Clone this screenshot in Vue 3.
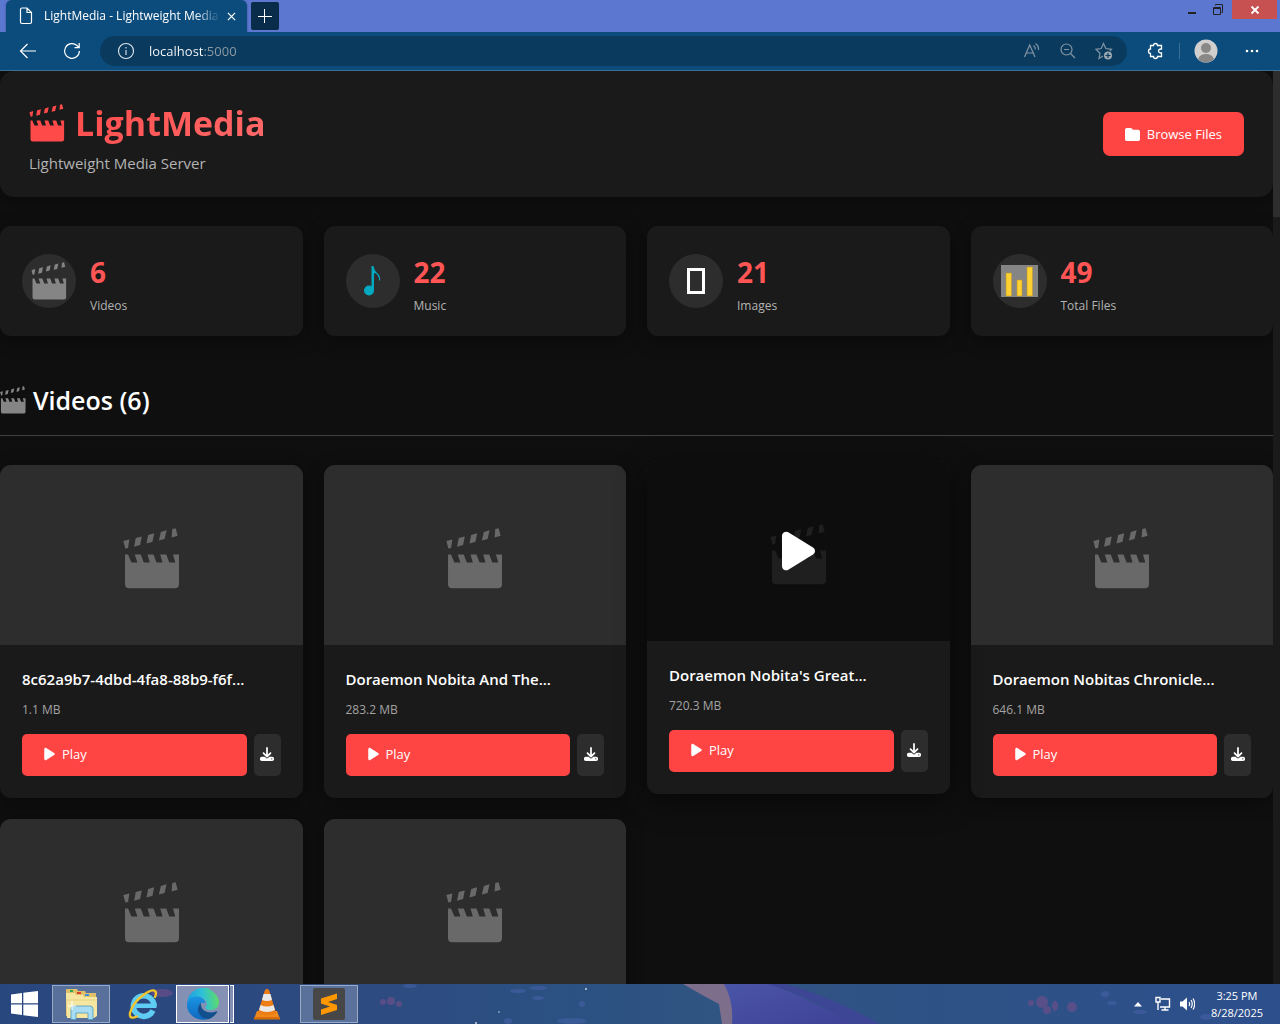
<script setup>
import { h } from 'vue'

const stats = [
  { kind: 'video', value: 6, label: 'Videos' },
  { kind: 'music', value: 22, label: 'Music' },
  { kind: 'image', value: 21, label: 'Images' },
  { kind: 'total', value: 49, label: 'Total Files' },
]

const videos = [
  { id: 1, title: '8c62a9b7-4dbd-4fa8-88b9-f6f...', size: '1.1 MB' },
  { id: 2, title: 'Doraemon Nobita And The...', size: '283.2 MB' },
  { id: 3, title: "Doraemon Nobita's Great...", size: '720.3 MB', active: true },
  { id: 4, title: 'Doraemon Nobitas Chronicle...', size: '646.1 MB' },
  { id: 5 },
  { id: 6 },
]

const icon = (viewBox, d) => () =>
  h('svg', { viewBox, fill: 'currentColor', 'aria-hidden': 'true' }, [h('path', { d })])

const ClapperIcon = icon(
  '0 0 170 182',
  'M6 79H15L25 103H43L35 79H53L62 103H80L73 79H91L100 103H118L111 79H129L138 103H156L149 79H167V168Q167 180 155 180H18Q6 180 6 168ZM1 39L19 34L15 60L7 61ZM38 30L56 25L51 51L33 56ZM75 21L93 16L88 41L70 46ZM113 12L130 7L124 33L107 37ZM147 3L157 1L163 23L145 28Z'
)
const PlayIcon = icon(
  '0 0 384 512',
  'M73 39c-14.8-9.1-33.4-9.4-48.5-.9S0 62.6 0 80V432c0 17.4 9.4 33.4 24.5 41.9s33.7 8.1 48.5-.9L361 297c14.3-8.7 23-24.2 23-41s-8.7-32.2-23-41L73 39z'
)
const FolderIcon = icon(
  '0 0 512 512',
  'M64 480H448c35.3 0 64-28.7 64-64V160c0-35.3-28.7-64-64-64H288c-10.1 0-19.6-4.7-25.6-12.8L243.2 57.6C231.1 41.5 212.1 32 192 32H64C28.7 32 0 60.7 0 96V416c0 35.3 28.7 64 64 64z'
)
const DownloadIcon = icon(
  '0 0 512 512',
  'M288 32c0-17.7-14.3-32-32-32s-32 14.3-32 32V274.7l-73.4-73.4c-12.5-12.5-32.8-12.5-45.3 0s-12.5 32.8 0 45.3l128 128c12.5 12.5 32.8 12.5 45.3 0l128-128c12.5-12.5 12.5-32.8 0-45.3s-32.8-12.5-45.3 0L288 274.7V32zM64 352c-35.3 0-64 28.7-64 64v32c0 35.3 28.7 64 64 64H448c35.3 0 64-28.7 64-64V416c0-35.3-28.7-64-64-64H346.5l-45.3 45.3c-25 25-65.5 25-90.5 0L165.5 352H64zm368 56a24 24 0 1 1 0 48 24 24 0 1 1 0-48z'
)
</script>

<template>
  <div class="screen">
    <div class="titlebar">
      <div class="tab">
        <svg class="doc" viewBox="0 0 14 18" fill="none" stroke="#fff" stroke-width="1.2">
          <path d="M1.500 2.500Q1.500 1 3 1H8L12.500 5.500V15Q12.500 16.500 11 16.500H3Q1.500 16.500 1.500 15ZM8 1V5.500H12.500" />
        </svg>
        <span class="tab-title">LightMedia - Lightweight Media Server</span>
        <button class="bare tab-close" aria-label="Close tab">
          <svg viewBox="0 0 10 10" stroke="#fff" stroke-width="1.4"><path d="M1 1L9 9M9 1L1 9" /></svg>
        </button>
      </div>
      <button class="bare new-tab" aria-label="New tab">
        <svg viewBox="0 0 14 14" stroke="#fff" stroke-width="1"><path d="M6.500 0V14M0 7.500H14" /></svg>
      </button>
      <div class="window-controls">
        <button class="bare win" aria-label="Minimize">
          <svg viewBox="0 0 12 12" fill="#222"><rect x="2" y="8" width="8" height="2" /></svg>
        </button>
        <button class="bare win" aria-label="Restore">
          <svg viewBox="0 0 12 12" fill="none" stroke="#222"><path d="M3.500 1.500V.5H10.500V8.500H9.500" /><path d="M1.500 3.500H8.500V10.500H1.500ZM1.500 4.500H8.500" /></svg>
        </button>
        <button class="bare win win-close" aria-label="Close">
          <svg viewBox="0 0 12 12" stroke="#fff" stroke-width="1.8"><path d="M2.500 2.500L9.500 9.500M9.500 2.500L2.500 9.500" /></svg>
        </button>
      </div>
    </div>

    <div class="toolbar">
      <div class="nav">
        <button class="bare" aria-label="Back">
          <svg class="glyph" viewBox="0 0 18 18" fill="none" stroke="#fff" stroke-width="1.2"><path d="M17 9H1.500M8.500 2L1.500 9L8.500 16" /></svg>
        </button>
        <button class="bare" aria-label="Refresh">
          <svg class="glyph" viewBox="0 0 18 18" fill="none" stroke="#fff" stroke-width="1.2"><path d="M16.400 9A7.400 7.400 0 1 1 14 3.500L16 5.500M16.200 1V5.700H11.500" /></svg>
        </button>
      </div>
      <div class="address">
        <svg class="glyph" viewBox="0 0 18 18" fill="none" stroke="#dfe8ef" stroke-width="1.1"><circle cx="9" cy="9" r="7.500" /><path d="M9 8V13M9 5V6.500" /></svg>
        <input class="url" aria-label="Address" value="localhost:5000" />
        <div class="address-actions">
          <button class="bare" aria-label="Read aloud">
            <svg class="glyph" viewBox="0 0 18 18" fill="none" stroke="#8395a3" stroke-width="1.2"><path d="M1.500 15L6.700 3L12 15M3.300 11H10.200M10.500 3.500Q12.500 5 12.300 7.500M12.500 1.500Q16 4 15.500 8" /></svg>
          </button>
          <button class="bare" aria-label="Zoom">
            <svg class="glyph" viewBox="0 0 18 18" fill="none" stroke="#8395a3" stroke-width="1.2"><circle cx="7.500" cy="7.500" r="5.500" /><path d="M5 7.500H10M11.500 11.500L16 16" /></svg>
          </button>
          <button class="bare" aria-label="Add to favorites">
            <svg class="glyph" viewBox="0 0 18 18" fill="none" stroke="#8395a3" stroke-width="1.2"><path d="M8 14L4 16.500L5 11.300L1 7.300L6.200 6.500L8.500 1.500L10.800 6.500L16.500 7.300L15 9" /><circle cx="13" cy="13.500" r="4" fill="#9aa7b1" stroke="none" /><path d="M13 11V16M10.500 13.500H15.500" stroke="#0a3a5e" /></svg>
          </button>
        </div>
      </div>
      <div class="tools">
        <button class="bare" aria-label="Extensions">
          <svg class="glyph" viewBox="0 0 18 18" fill="none" stroke="#fff" stroke-width="1.3"><path d="M4.500 3.500H7.500Q7.500 1.500 9.500 1.500Q11.500 1.500 11.500 3.500H15.500V7H14.500Q12.500 7.200 12.500 9Q12.500 10.800 14.500 11H15.500V14.500H11.500Q11.500 16.500 9.500 16.500Q7.500 16.500 7.500 14.500H4.500V11.500Q2.500 11.500 2.500 9.300Q2.500 7 4.500 7Z" /></svg>
        </button>
        <span class="divider"></span>
        <button class="bare" aria-label="Profile">
          <svg class="avatar" viewBox="0 0 24 24"><circle cx="12" cy="12" r="11.500" fill="#d2d0ce" /><circle cx="12" cy="9" r="5" fill="#8a8886" /><path d="M4 20Q6 15 12 15T20 20A11.500 11.500 0 0 1 4 20" fill="#8a8886" /></svg>
        </button>
        <button class="bare dots" aria-label="Settings and more">
          <svg class="glyph" viewBox="0 0 18 18" fill="#fff"><circle cx="4" cy="9" r="1.300" /><circle cx="9" cy="9" r="1.300" /><circle cx="14" cy="9" r="1.300" /></svg>
        </button>
      </div>
    </div>

    <div class="viewport">
      <main class="page">
        <header class="hero">
          <div>
            <h1><ClapperIcon class="hero-clapper" /><span class="brand">LightMedia</span></h1>
            <p class="tagline">Lightweight Media Server</p>
          </div>
          <a class="browse" href="#"><FolderIcon class="folder" />Browse Files</a>
        </header>

        <section class="stats">
          <div v-for="s in stats" :key="s.kind" class="stat">
            <div class="stat-icon">
              <ClapperIcon v-if="s.kind === 'video'" class="stat-clapper" />
              <svg v-else-if="s.kind === 'music'" class="note" viewBox="0 0 54 54" fill="#00a9c0">
                <circle cx="23" cy="36.500" r="5" /><path d="M25.500 12H27.500Q28 16 31 19Q35 22 34 26.500H33Q33 20 28 19V37H25.500Z" />
              </svg>
              <span v-else-if="s.kind === 'image'" class="missing"></span>
              <svg v-else class="chart" viewBox="0 0 37 32"><path fill="#858585" d="M0 0H37V32H0Z" /><path fill="#ffd02f" stroke="#bd9c2e" stroke-width=".6" d="M5 8H10.500V31H5ZM16 15H21V31H16ZM26 2H31.500V31H26Z" /></svg>
            </div>
            <div class="stat-text">
              <div class="stat-value">{{ s.value }}</div>
              <div class="stat-label">{{ s.label }}</div>
            </div>
          </div>
        </section>

        <h2><ClapperIcon class="heading-clapper" />Videos (6)</h2>

        <section class="grid">
          <article v-for="v in videos" :key="v.id" class="card" :class="{ active: v.active }">
            <div class="thumb">
              <ClapperIcon class="thumb-clapper" />
              <div v-if="v.active" class="overlay"><PlayIcon class="overlay-play" /></div>
            </div>
            <div v-if="v.title" class="body">
              <h3>{{ v.title }}</h3>
              <p class="size">{{ v.size }}</p>
              <div class="actions">
                <button class="play"><PlayIcon class="play-icon" />Play</button>
                <button class="download" aria-label="Download"><DownloadIcon class="download-icon" /></button>
              </div>
            </div>
          </article>
        </section>
      </main>
      <div class="scrollbar"><div class="scroll-thumb"></div></div>
    </div>

    <footer class="taskbar">
      <svg class="wallpaper" viewBox="0 0 1280 40" preserveAspectRatio="none" aria-hidden="true">
        <defs>
          <linearGradient id="sky" x1="0" x2="1" y1="0" y2="0">
            <stop offset="0" stop-color="#29477f" />
            <stop offset=".3" stop-color="#2d4b80" />
            <stop offset=".45" stop-color="#2b5182" />
            <stop offset=".56" stop-color="#315582" />
            <stop offset=".7" stop-color="#2f5285" />
            <stop offset="1" stop-color="#2d4f8c" />
          </linearGradient>
          <linearGradient id="river" x1="0" x2="1" y1="0" y2="1">
            <stop offset="0" stop-color="#4a55a8" />
            <stop offset="1" stop-color="#3f4296" />
          </linearGradient>
        </defs>
        <path fill="url(#sky)" d="M0 0H1280V40H0Z" />
        <path fill="#7d6e8c" d="M683 0H726Q734 18 733 40H722L719 20L704 12Z" />
        <path fill="url(#river)" d="M724 0H770L800 12L840 32L856 40H732Q734 18 724 0Z" />
        <path fill="#3c4695" d="M768 0H786Q830 12 880 40H850Q815 14 768 0Z" />
        <g fill="#4a64ac" opacity=".5">
          <ellipse cx="518" cy="7" rx="8" ry="2" /><ellipse cx="538" cy="4" rx="9" ry="2" /><ellipse cx="538" cy="14" rx="6" ry="2" /><ellipse cx="582" cy="20" rx="3" ry="3" /><ellipse cx="508" cy="37" rx="4" ry="3" /><ellipse cx="572" cy="37" rx="15" ry="3" /><ellipse cx="410" cy="2" rx="7" ry="2" /><ellipse cx="1105" cy="10" rx="4" ry="3" /><ellipse cx="1112" cy="19" rx="5" ry="2" /><ellipse cx="1140" cy="28" rx="7" ry="2" /><ellipse cx="1206" cy="33" rx="6" ry="3" />
        </g>
        <g fill="#6b4f89" opacity=".7">
          <circle cx="1042" cy="18" r="6" /><circle cx="1031" cy="19" r="3" /><circle cx="1047" cy="26" r="4" /><ellipse cx="1055" cy="22" rx="3" ry="5" /><circle cx="1072" cy="23" r="5" /><circle cx="383" cy="18" r="3" /><circle cx="391" cy="17" r="4" /><circle cx="399" cy="20" r="3" /><ellipse cx="162" cy="9" rx="11" ry="4" />
        </g>
        <g fill="#c8d4e0"><circle cx="586" cy="5" r="1" /><circle cx="499" cy="28" r=".8" /><circle cx="476" cy="39" r="1" /></g>
      </svg>
      <button class="bare start" aria-label="Start">
        <svg class="winlogo" viewBox="0 0 27 26" fill="#fff"><path d="M0 3.500L11 2V12.300H0ZM12.300 1.800L27 0V12.300H12.300ZM0 13.600H11V24L0 22.500ZM12.300 13.600H27V26L12.300 24.200Z" /></svg>
      </button>
      <button class="bare task open" aria-label="File Explorer">
        <svg class="app" viewBox="0 0 36 32">
          <path fill="#e0c169" d="M3 2Q3 1 4 1H14L15 3H22L23 5H33V28H3Z" />
          <path fill="#2bab4d" d="M7 2H10V4H7Z" /><path fill="#d9412c" d="M14 4H18V6H14Z" /><path fill="#3b94dd" d="M22 6H26V8H22Z" />
          <path fill="#f5e6a1" d="M3 5H12L13 7H20L21 9H34V28L31 30H4Z" />
          <path fill="#e8d27f" d="M3 11H34V13H3Z" opacity=".5" />
          <path fill="#a8dcf2" stroke="#4b9ac0" stroke-width=".8" d="M8 31.500V21Q8 18 11 18H27Q30 18 30 21V31.500H25V25H13V31.500Z" />
          <path stroke="#fff" d="M9 13V22M5 18H13" />
        </svg>
      </button>
      <button class="bare task" aria-label="Internet Explorer">
        <svg class="app" viewBox="0 0 36 32">
          <path fill="none" stroke="#5fcdf3" stroke-width="5.500" d="M28 22.500A10.300 10.300 0 1 1 29 18" />
          <path fill="#5fcdf3" d="M10 15.500H31.500V20H10Z" />
          <path fill="none" stroke="#f3c32b" stroke-width="2.400" stroke-linecap="round" d="M12 28.500Q4 32 5 25Q8 14 19 6.500Q30 -1 31 5Q31 7 30 9" />
        </svg>
      </button>
      <button class="bare task edge" aria-label="Microsoft Edge">
        <span class="edge-front">
          <svg class="edge-logo" viewBox="0 0 32 32">
            <defs>
              <linearGradient id="edge-top" x1="0" x2="1" y1=".4" y2=".3"><stop offset="0" stop-color="#1e9de0" /><stop offset=".5" stop-color="#2fc2d6" /><stop offset="1" stop-color="#62dc62" /></linearGradient>
              <linearGradient id="edge-left" x1="0" x2="0" y1="0" y2="1"><stop offset="0" stop-color="#1a94e4" /><stop offset="1" stop-color="#0f68bd" /></linearGradient>
            </defs>
            <path fill="url(#edge-top)" d="M0 15Q1 5 10 1T25 3Q32 8 32 15Q31 22 24 22Q18 22 18.500 19Q22 15 17 11Q9 5 0 15Z" />
            <path fill="url(#edge-left)" d="M0 15Q3 8 10 8.500Q17 9 18.500 15Q12 14 11.500 20Q11.500 27 20 31.500Q11 33 5 27.500T0 15Z" />
            <path fill="#124f8d" d="M14 14.500Q8 21 13 27Q17 32 22 31Q27 29 30 24.500Q31 23 29 23.500Q22 26 17 22.500Q13 19 14 14.500Z" />
          </svg>
        </span>
        <span class="edge-back"></span>
      </button>
      <button class="bare task" aria-label="VLC media player">
        <svg class="app" viewBox="0 0 36 32">
          <path fill="#f08a1c" d="M8 23H28L31 31H5Z" /><path fill="#d86c08" d="M5 29H31V31.500H5Z" />
          <path fill="#ee7d16" d="M16 2Q18 0 20 2L27 25Q18 30 9 25Z" />
          <path fill="#e9e9e9" d="M14.500 6H21.500L23 12Q18 14 13 12ZM11.500 17Q18 20 24.500 17L26 22Q18 26 10 22Z" />
        </svg>
      </button>
      <button class="bare task open" aria-label="Sublime Text">
        <svg class="sublime" viewBox="0 0 32 32"><rect width="32" height="32" rx="2" fill="#474747" /><path fill="#ff9800" d="M8 10.500L24 5.500V11L15 14L24 17V22L8 27V21.500L17 18.500L8 15.500Z" /></svg>
      </button>
      <div class="tray">
        <svg class="caret" viewBox="0 0 8 5" fill="#fff"><path d="M4 0L8 4.500H0Z" /></svg>
        <svg class="tray-icon" viewBox="0 0 16 16" fill="none" stroke="#fff" stroke-width="1.4"><path d="M6 3H14.500V11H5M10 11V14M6.500 14H13.500M3 6V14" /><path d="M1 1.500H5V6H1Z" /></svg>
        <svg class="tray-icon" viewBox="0 0 16 16"><path fill="#fff" d="M1 5.500H3.500L8 1.500V14.500L3.500 10.500H1Z" /><path fill="none" stroke="#fff" stroke-width="1.200" d="M10 6Q11.300 8 10 10M12 4Q14.500 8 12 12M14 2.500Q17.500 8 14 13.500" /></svg>
        <div class="clock"><div>3:25 PM</div><div>8/28/2025</div></div>
      </div>
    </footer>
  </div>
</template>

<style>
body {
  background: #0f0f0f;
}
</style>

<style scoped>
.screen {
  display: flex;
  flex-direction: column;
  height: 100vh;
  overflow: hidden;
  font-family: "Open Sans", "Noto Sans", sans-serif;
  color: #fff;
}
.screen * {
  box-sizing: border-box;
}
h1, h2, h3, p {
  margin: 0;
}
svg {
  display: block;
  flex: none;
}
.bare {
  display: flex;
  align-items: center;
  justify-content: center;
  padding: 0;
  border: 0;
  background: none;
  color: inherit;
}
.glyph {
  width: 18px;
  height: 18px;
}

/* browser chrome */
.titlebar {
  display: flex;
  flex: none;
  height: 32px;
  padding-left: 6px;
  background: #5c77cf;
}
.tab {
  display: flex;
  align-items: center;
  width: 241px;
  padding: 0 11px 0 13px;
  border-radius: 6px 6px 0 0;
  background: #0c4c7c;
  box-shadow: 0 0 2px #2b4b8c;
}
.doc {
  width: 14px;
  height: 18px;
}
.tab-title {
  flex: 1;
  margin: 0 6px 0 11px;
  overflow: hidden;
  white-space: nowrap;
  font-size: 12px;
  line-height: 20px;
  mask-image: linear-gradient(90deg, #000 85%, transparent);
}
.tab-close svg {
  width: 9px;
  height: 9px;
}
.new-tab {
  width: 28px;
  height: 28px;
  margin: 2px 0 0 4px;
  border-radius: 2px;
  background: #082c4a;
}
.new-tab svg {
  width: 14px;
  height: 14px;
}
.window-controls {
  display: flex;
  margin: 0 3px 0 auto;
}
.win {
  width: 26px;
  height: 19px;
}
.win svg {
  width: 12px;
  height: 12px;
}
.win-close {
  width: 45px;
  margin-left: 1px;
  background: #c75050;
}
.toolbar {
  display: flex;
  flex: none;
  align-items: center;
  height: 39px;
  border-bottom: 1px solid #3b6f96;
  background: #0c4c7c;
}
.nav {
  display: flex;
  gap: 26px;
  padding: 0 19px;
}
.address {
  display: flex;
  flex: 1;
  align-items: center;
  height: 30px;
  padding: 0 14px 0 17px;
  border-radius: 15px;
  background: #0a3a5e;
}
.url {
  flex: 1;
  min-width: 0;
  margin-left: 14px;
  padding: 0;
  border: 0;
  outline: 0;
  background: linear-gradient(90deg, #fff 55px, #8f9ca6 55px);
  background-clip: text;
  -webkit-text-fill-color: transparent;
  font: 13px "Open Sans", "Noto Sans", sans-serif;
}
.address-actions {
  display: flex;
  gap: 18px;
}
.tools {
  display: flex;
  align-items: center;
  padding: 0 19px;
}
.divider {
  width: 1px;
  height: 16px;
  margin: 0 14px 0 15px;
  background: #3b6f96;
}
.avatar {
  width: 24px;
  height: 24px;
}
.dots {
  margin-left: 25px;
}

/* media page */
.viewport {
  display: flex;
  flex: 1;
  min-height: 0;
  background: #0f0f0f;
}
.page {
  flex: 1;
  min-width: 0;
  overflow: hidden;
}
.scrollbar {
  flex: none;
  width: 7px;
  background: #1a1a1a;
}
.scroll-thumb {
  height: 146px;
  background: #2d2d2d;
}
.hero {
  display: flex;
  align-items: center;
  justify-content: space-between;
  padding: 22px 29px;
  border-radius: 14px;
  background: #1a1a1a;
  box-shadow: 0 4px 18px rgba(0, 0, 0, 0.4);
}
h1 {
  display: flex;
  align-items: center;
  gap: 10px;
  font-size: 34px;
  line-height: 60px;
  color: #ff4a4a;
}
.hero-clapper {
  width: 36px;
  height: 38px;
}
.brand {
  background: linear-gradient(135deg, #ff4a4a, #ff6b6b);
  background-clip: text;
  color: transparent;
}
.tagline {
  margin-bottom: 2px;
  font-size: 15px;
  line-height: 20px;
  color: #b3b3b3;
}
.browse {
  display: flex;
  align-items: center;
  gap: 7px;
  height: 44px;
  padding: 0 22px;
  border-radius: 7px;
  background: #ff4444;
  color: #fff;
  font-size: 13px;
  text-decoration: none;
}
.folder {
  width: 15px;
  height: 15px;
}
.stats {
  display: grid;
  grid-template-columns: repeat(4, 1fr);
  gap: 21px;
  margin-top: 29px;
}
.stat {
  display: flex;
  align-items: center;
  gap: 14px;
  padding: 20px 22px;
  border-radius: 11px;
  background: #1a1a1a;
  box-shadow: 0 4px 18px rgba(0, 0, 0, 0.4);
}
.stat-icon {
  display: flex;
  align-items: center;
  justify-content: center;
  width: 54px;
  height: 54px;
  border-radius: 50%;
  background: #2d2d2d;
  color: #858585;
}
.stat-clapper {
  width: 36px;
  height: 38px;
}
.note {
  width: 54px;
  height: 54px;
}
.missing {
  width: 18px;
  height: 26px;
  border: 3px solid #fff;
}
.chart {
  width: 37px;
  height: 32px;
}
.stat-text {
  padding-top: 3px;
}
.stat-value {
  font-size: 28px;
  font-weight: 700;
  line-height: 46px;
  color: #ff5555;
}
.stat-label {
  font-size: 12px;
  line-height: 21px;
  color: #b3b3b3;
}
h2 {
  display: flex;
  align-items: center;
  gap: 7px;
  margin: 44px 0 29px;
  padding-bottom: 15px;
  border-bottom: 1px solid #404040;
  font-size: 25px;
  font-weight: 600;
  line-height: 40px;
}
.heading-clapper {
  width: 26px;
  height: 28px;
  color: #858585;
}
.grid {
  display: grid;
  grid-template-columns: repeat(4, 1fr);
  gap: 21px;
}
.card {
  overflow: hidden;
  border-radius: 11px;
  background: #1a1a1a;
  box-shadow: 0 4px 18px rgba(0, 0, 0, 0.4);
}
.card.active {
  transform: translateY(-4px);
  box-shadow: 0 8px 28px rgba(0, 0, 0, 0.5);
}
.thumb {
  position: relative;
  display: flex;
  align-items: center;
  justify-content: center;
  height: 180px;
  padding-top: 6px;
  background: #2d2d2d;
  color: #696969;
}
.thumb-clapper {
  width: 57px;
  height: 61px;
}
.overlay {
  position: absolute;
  inset: 0;
  display: flex;
  align-items: center;
  justify-content: center;
  background: rgba(0, 0, 0, 0.7);
  color: #fff;
}
.overlay-play {
  width: 33px;
  height: 44px;
}
.body {
  padding: 22px;
}
h3 {
  overflow: hidden;
  white-space: nowrap;
  font-size: 15px;
  font-weight: 600;
  line-height: 25px;
}
.size {
  margin: 8px 0 14px;
  font-size: 12px;
  line-height: 20px;
  color: #a3a3a3;
}
.actions {
  display: flex;
  gap: 7px;
}
.play,
.download {
  display: flex;
  align-items: center;
  height: 42px;
  border: 0;
  border-radius: 5px;
  color: #fff;
}
.play {
  flex: 1;
  gap: 7px;
  padding: 0 22px 2px;
  background: #ff4444;
  font: 500 13px "Open Sans", "Noto Sans", sans-serif;
}
.play-icon {
  width: 11px;
  height: 14px;
}
.download {
  justify-content: center;
  width: 27px;
  padding: 0 0 2px;
  background: #2d2d2d;
}
.download-icon {
  width: 14px;
  height: 14px;
}

/* taskbar */
.taskbar {
  position: relative;
  z-index: 0;
  display: flex;
  flex: none;
  align-items: center;
  gap: 4px;
  height: 40px;
  overflow: hidden;
}
.wallpaper {
  position: absolute;
  inset: 0;
  z-index: -1;
  width: 100%;
  height: 100%;
}
.start {
  width: 48px;
  height: 40px;
}
.winlogo {
  width: 27px;
  height: 26px;
}
.task {
  width: 58px;
  height: 38px;
}
.task.open {
  border: 1px solid rgba(255, 255, 255, 0.4);
  background: rgba(255, 255, 255, 0.22);
}
.app {
  width: 36px;
  height: 32px;
}
.edge {
  gap: 1px;
}
.edge-front {
  display: flex;
  flex: 1;
  align-items: center;
  justify-content: center;
  height: 38px;
  border: 1px solid #fff;
  background: #8491b5;
}
.edge-back {
  width: 4px;
  height: 38px;
  border: 1px solid #fff;
  border-left: 0;
  background: #8491b5;
}
.edge-logo,
.sublime {
  width: 32px;
  height: 32px;
}
.tray {
  display: flex;
  align-items: center;
  margin: 0 17px 0 auto;
}
.caret {
  width: 8px;
  height: 5px;
  margin-right: 13px;
}
.tray-icon {
  width: 16px;
  height: 16px;
  margin-right: 8px;
}
.clock {
  margin-left: 8px;
  font-size: 11px;
  line-height: 17px;
  text-align: center;
}
</style>
